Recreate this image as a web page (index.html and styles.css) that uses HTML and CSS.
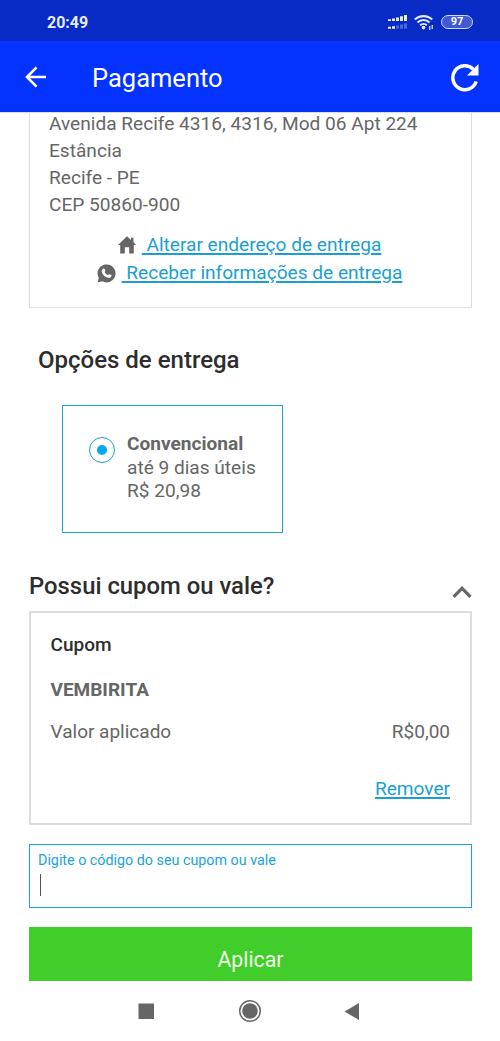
FILE: index.html
```html
<!DOCTYPE html>
<html lang="pt-BR">
<head>
<meta charset="utf-8">
<meta name="viewport" content="width=device-width, initial-scale=1">
<title>Pagamento</title>
<link rel="stylesheet" href="styles.css">
</head>
<body>
<div class="screen">
  <header class="status">
    <span class="clock">20:49</span>
    <svg class="signal" width="20" height="16" viewBox="0 0 20 16">
      <g fill="#e4edff"><path d="M0 5.2h3V7H0zM4 4.4h3V7H4zM8 3.5h3V7H8zM12 2.3h3V7h-3zM16 1h3v6h-3z"/><path d="M0 12.8h3v2H0zM4 12.2h3v2.6H4z"/></g>
      <path d="M8 11.5h3v3.3H8zM12 10.5h3v4.3h-3zM16 9.5h3v5.3h-3z" fill="#4a64da"/>
    </svg>
    <svg class="wifi" width="21" height="17" viewBox="0 0 21 17">
      <g fill="none" stroke="#e4edff" stroke-width="2.1"><path d="M.8 5.6a12.5 12.5 0 0 1 17.4 0"/><path d="M3.5 8.5a8.6 8.6 0 0 1 12 0"/><path d="M6.2 11.3a4.7 4.7 0 0 1 6.6 0"/></g>
      <circle cx="9.5" cy="13.6" r="1.8" fill="#e4edff"/>
      <path d="M15.7 12v4M18.2 11v4" stroke="#e4edff" stroke-width="1.2"/>
    </svg>
    <span class="battery">97</span>
  </header>

  <div class="appbar">
    <svg class="back" width="22" height="22" viewBox="0 0 22 22" fill="none" stroke="#fff" stroke-width="2.6"><path d="M21 11H2.200M11.500 1.400 2 11l9.500 9.600"/></svg>
    <h1 class="title">Pagamento</h1>
    <svg class="reload" width="28" height="29" viewBox="0 0 28 29"><path d="M25.200 18.500A12 12 0 1 1 22.300 6.200" fill="none" stroke="#fff" stroke-width="3.500"/><path d="M27.500 1v11.500H16z" fill="#fff"/></svg>
  </div>

  <main class="content">
    <section class="address">
      <div class="lines">
        <p>Avenida Recife 4316, 4316, Mod 06 Apt 224</p>
        <p>Estância</p>
        <p>Recife - PE</p>
        <p>CEP 50860-900</p>
      </div>
      <div class="links">
        <div class="linkrow">
          <svg width="18" height="18" viewBox="0 0 18 18"><path d="M9 .3 13 4V1.800h2.500v4.500L18 9h-2.200v8.500h-4.600v-6.300H6.800v6.300H2.200V9H0z" fill="#666"/></svg>
          <a class="link home">&nbsp;Alterar endereço de entrega</a>
        </div>
        <div class="linkrow">
          <svg width="19" height="19" viewBox="0 0 19 19"><path d="M.5 18.500 1.800 14A9 9 0 1 1 5.200 17.300z" fill="#666"/><path d="M6.300 4.600c.6-.4 1.100-.2 1.300.3l.7 1.600c.2.500-.1.900-.7 1.500.8 1.500 1.800 2.500 3.400 3.200.7-.8 1-1.100 1.500-.9l1.700.8c.5.300.4.900.1 1.500-.6 1.200-2 1.600-3.300 1.200-3.100-.8-5.400-3.100-6.200-5.900-.3-1.400.3-2.600 1.500-3.300z" fill="#fff"/></svg>
          <a class="link chat">&nbsp;Receber informações de entrega</a>
        </div>
      </div>
    </section>

    <h2 class="heading delivery">Opções de entrega</h2>
    <section class="option">
      <span class="radio"></span>
      <div class="details">
        <strong>Convencional</strong>
        <span class="term">até 9 dias úteis</span>
        <span class="price">R$ 20,98</span>
      </div>
    </section>

    <div class="couponhead">
      <h2 class="heading possui">Possui cupom ou vale?</h2>
      <svg width="20" height="13" viewBox="0 0 20 13"><path d="m1.500 10.800 8.500-8.500 8.500 8.500" fill="none" stroke="#666" stroke-width="3.200"/></svg>
    </div>
    <section class="coupon">
      <h3>Cupom</h3>
      <strong class="code">VEMBIRITA</strong>
      <div class="amount"><span class="applied">Valor aplicado</span><span class="value">R$0,00</span></div>
      <a class="link remove">Remover</a>
    </section>

    <div class="field">
      <label>Digite o código do seu cupom ou vale</label>
      <span class="caret"></span>
    </div>
    <div class="apply">Aplicar</div>
  </main>

  <nav class="nav">
    <svg width="500" height="60" viewBox="0 0 500 60" fill="#666"><path d="M138.500 22.500h15.500v15.500h-15.500z"/><circle cx="250" cy="30" r="7.800"/><circle cx="250" cy="30" r="10.300" fill="none" stroke="#666" stroke-width="1.500"/><path d="M359 22v17l-14.500-8.500z"/></svg>
  </nav>
</div>
</body>
</html>
```
FILE: styles.css
```css
* { box-sizing: border-box; margin: 0; padding: 0; }
body { background: #fff; font-family: Roboto, sans-serif; color: #666; }
svg { display: block; flex: none; }
.screen { width: 500px; height: 1041px; display: flex; flex-direction: column; overflow: hidden; }

.status { height: 41px; flex: none; background: #082bc5; display: flex; align-items: center; padding: 3px 27px 0 47px; }
.clock { font-size: 16px; font-weight: 700; line-height: 20px; color: #e4edff; margin: 1px auto 0 0; }
.signal { margin-right: 6px; }
.wifi { margin-right: 6px; }
.battery { width: 32px; height: 14px; border: 1.500px solid #c9d6ff; border-radius: 7px; background: #4259d4; color: #fff; font-size: 11px; font-weight: 700; line-height: 12px; text-align: center; }

.appbar { height: 71px; flex: none; background: #0433ff; display: flex; align-items: center; padding: 0 21px 0 25px; }
.title { font-size: 25.500px; font-weight: 400; line-height: 30px; color: #fff; margin: 2px auto 0 45px; }
.reload { margin-top: 1px; }

.content { height: 869px; flex: none; overflow: hidden; padding: 0 28px 0 29px; border-top: 1px solid #d5dcf8; }
.address { display: flow-root; height: 195px; border: 1px solid #ddd; border-top: 0; padding-left: 19px; }
.lines { margin-top: -3px; }
.address p { font-size: 19.100px; line-height: 27px; }
.links { margin: 13px 21px 0 0; }
.linkrow { height: 28px; display: flex; justify-content: center; align-items: center; gap: 6px; }
.link { font-size: 19.100px; line-height: 28px; color: #1a9fd2; text-decoration: underline; text-decoration-thickness: 1.500px; text-underline-offset: 2px; }

.heading { font-size: 24px; font-weight: 500; line-height: 30px; color: #2d2d2d; }
.delivery { margin: 37px 0 0 9px; }
.possui { font-size: 23.850px; }
.option { width: 221px; height: 128px; border: 1px solid #1ba3d6; margin: 30px 0 0 33px; padding: 26px 0 0 26px; display: flex; }
.radio { width: 26px; height: 26px; border: 1px solid #1ba3d6; border-radius: 50%; margin: 5px 12px 0 0; display: grid; place-items: center; }
.radio::after { content: ""; width: 10px; height: 10px; border-radius: 50%; background: #03a9f4; }
.details { display: flex; flex-direction: column; align-items: flex-start; font-size: 19.100px; line-height: 23.700px; }

.couponhead { display: flex; justify-content: space-between; height: 40px; margin-top: 38px; }
.couponhead svg { margin-top: 15px; }
.coupon { height: 214px; border: 2px solid #ddd; padding: 20px 20px 0 19.500px; display: flex; flex-direction: column; align-items: flex-start; }
.coupon h3 { font-size: 19px; line-height: 24px; font-weight: 500; color: #2d2d2d; }
.code { font-size: 19px; line-height: 24px; margin-top: 21px; }
.amount { align-self: stretch; display: flex; justify-content: space-between; font-size: 19px; line-height: 24px; margin-top: 18px; }
.remove { align-self: flex-end; margin-top: 31px; }

.field { height: 64px; border: 1px solid #1ba3d6; margin-top: 19px; padding: 7px 8px; }
.field label { display: block; font-size: 14.300px; line-height: 17px; color: #1ba3d6; }
.caret { display: block; width: 1px; height: 22px; background: #555; margin: 5px 0 0 1.500px; }
.apply { height: 54px; background: #41cd2a; margin-top: 19px; padding-top: 19px; text-align: center; font-size: 21.300px; line-height: 28px; color: #f0ffe8; }
.nav { height: 60px; flex: none; background: #fff; }
```
